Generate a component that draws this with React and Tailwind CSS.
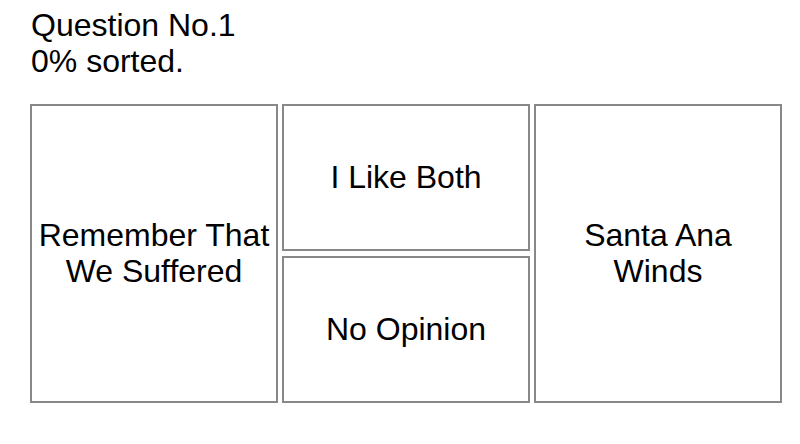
import React from "react";

const boxClass =
  "flex items-center justify-center text-center border-2 border-[#888888] bg-white px-1 pb-[2px] leading-[36px]";

export default function App() {
  const question = {
    number: 1,
    sorted: 0,
    left: "Remember That We Suffered",
    right: "Santa Ana Winds",
  };

  return (
    <div className="min-h-[444px] w-[800px] bg-white text-black text-[32px] font-['Liberation_Sans',Arial,sans-serif] pl-[30px] pt-[7px]">
      <div className="leading-[36px] pl-[1px]">
        <div>Question No.{question.number}</div>
        <div>{question.sorted}% sorted.</div>
      </div>

      {/* Sorting boxes */}
      <div className="mt-[25px] flex gap-[4px]">
        <div className={`${boxClass} w-[248px] h-[299px]`}>{question.left}</div>
        <div className="flex flex-col gap-[5px] w-[248px] h-[299px]">
          <div className={`${boxClass} flex-1`}>I Like Both</div>
          <div className={`${boxClass} flex-1`}>No Opinion</div>
        </div>
        <div className={`${boxClass} w-[248px] h-[299px]`}>{question.right}</div>
      </div>
    </div>
  );
}
